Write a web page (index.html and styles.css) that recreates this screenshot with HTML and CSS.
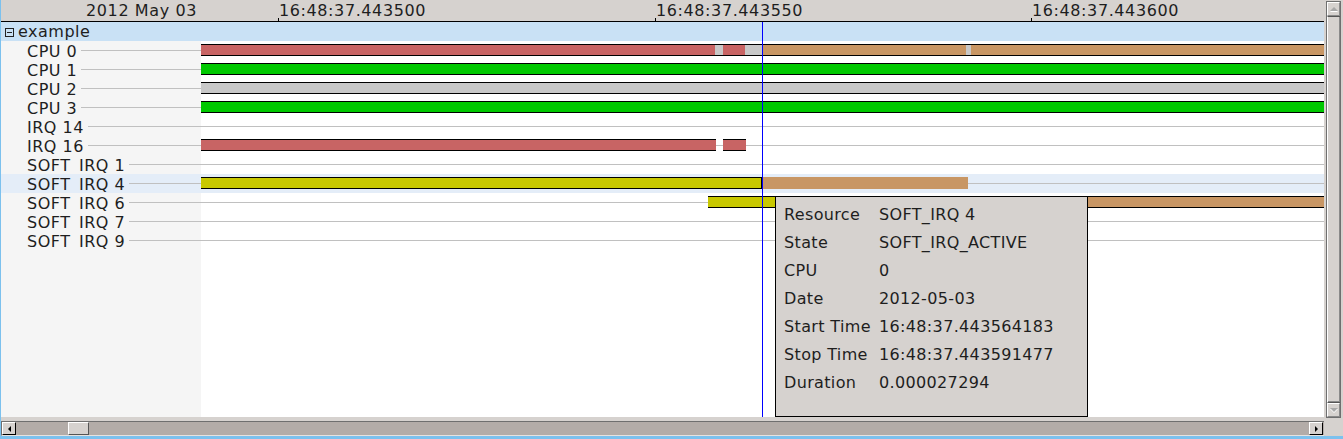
FILE: index.html
```html
<!DOCTYPE html>
<html>
<head>
<meta charset="utf-8">
<link rel="stylesheet" href="styles.css">
</head>
<body>
<div class="window">
  <div class="timeline">
    <div class="header">
      <div class="date">2012 May 03</div>
      <div class="axis">
        <span class="tick" style="left:77px">16:48:37.443500</span>
        <span class="tick" style="left:454px">16:48:37.443550</span>
        <span class="tick" style="left:830px">16:48:37.443600</span>
      </div>
    </div>
    <div class="group"><span class="toggle"></span><span class="gname">example</span></div>
    <div class="body">
      <div class="labels">
        <div class="lrow"><span class="ltext">CPU 0</span><span class="lline"></span></div>
        <div class="lrow"><span class="ltext">CPU 1</span><span class="lline"></span></div>
        <div class="lrow"><span class="ltext">CPU 2</span><span class="lline"></span></div>
        <div class="lrow"><span class="ltext">CPU 3</span><span class="lline"></span></div>
        <div class="lrow"><span class="ltext">IRQ 14</span><span class="lline"></span></div>
        <div class="lrow"><span class="ltext">IRQ 16</span><span class="lline"></span></div>
        <div class="lrow"><span class="ltext">SOFT_IRQ 1</span><span class="lline"></span></div>
        <div class="lrow hl"><span class="ltext">SOFT_IRQ 4</span><span class="lline"></span></div>
        <div class="lrow"><span class="ltext">SOFT_IRQ 6</span><span class="lline"></span></div>
        <div class="lrow"><span class="ltext">SOFT_IRQ 7</span><span class="lline"></span></div>
        <div class="lrow"><span class="ltext">SOFT_IRQ 9</span><span class="lline"></span></div>
      </div>
      <div class="chart">
        <div class="crow">
          <span class="seg red" style="left:0;width:514px"></span>
          <span class="seg gray" style="left:514px;width:8px"></span>
          <span class="seg red" style="left:522px;width:22px"></span>
          <span class="seg gray" style="left:544px;width:17px"></span>
          <span class="seg tan" style="left:561px;width:204px"></span>
          <span class="seg gray" style="left:765px;width:5px"></span>
          <span class="seg tan" style="left:770px;width:353px"></span>
        </div>
        <div class="crow"><span class="seg green" style="left:0;width:1123px"></span></div>
        <div class="crow"><span class="seg gray" style="left:0;width:1123px"></span></div>
        <div class="crow"><span class="seg green" style="left:0;width:1123px"></span></div>
        <div class="crow"></div>
        <div class="crow">
          <span class="seg red" style="left:0;width:515px"></span>
          <span class="seg red" style="left:522px;width:23px"></span>
        </div>
        <div class="crow"></div>
        <div class="crow hl">
          <span class="seg yellow sel" style="left:0;width:561px"></span>
          <span class="seg tan flat" style="left:561px;width:206px"></span>
        </div>
        <div class="crow">
          <span class="seg yellow" style="left:507px;width:193px"></span>
          <span class="seg tan" style="left:700px;width:423px"></span>
        </div>
        <div class="crow"></div>
        <div class="crow"></div>
      </div>
    </div>
    <div class="cursor" style="left:761px"></div>
    <div class="tooltip">
      <span>Resource</span><span>SOFT_IRQ 4</span>
      <span>State</span><span>SOFT_IRQ_ACTIVE</span>
      <span>CPU</span><span>0</span>
      <span>Date</span><span>2012-05-03</span>
      <span>Start Time</span><span>16:48:37.443564183</span>
      <span>Stop Time</span><span>16:48:37.443591477</span>
      <span>Duration</span><span>0.000027294</span>
    </div>
  </div>
  <div class="hcell">
    <div class="hscroll">
      <span class="sbtn"><span class="arrow-left"></span></span>
      <span class="hthumb"></span>
      <span class="hspace"></span>
      <span class="sbtn"><span class="arrow-right"></span></span>
    </div>
  </div>
  <div class="vcol">
    <div class="vscroll">
      <span class="vbtn"><span class="arrow-up"></span></span>
      <span class="vthumb"></span>
      <span class="vbtn"><span class="arrow-down"></span></span>
    </div>
  </div>
</div>
</body>
</html>
```

FILE: styles.css
```css
html, body {
  margin: 0;
  padding: 0;
  background: #d6d2cf;
}
body {
  font-family: "DejaVu Sans", Verdana, sans-serif;
  font-size: 16px;
  color: #1e1e1e;
}
.window {
  width: 1342px;
  height: 436px;
  border-left: 1px solid #7cc1ee;
  border-bottom: 3px solid #7cc1ee;
  display: grid;
  grid-template-columns: 1323px 19px;
  grid-template-rows: 417px 19px;
  background: #d6d2cf;
  overflow: hidden;
}
.timeline {
  grid-column: 1;
  grid-row: 1;
  position: relative;
  display: flex;
  flex-direction: column;
  overflow: hidden;
}
.header {
  height: 22px;
  box-sizing: border-box;
  border-bottom: 1px solid #000;
  padding-top: 1px;
  line-height: 20px;
  display: flex;
  background: #d6d2cf;
  letter-spacing: 0.6px;
  white-space: nowrap;
}
.date {
  width: 200px;
  box-sizing: border-box;
  text-align: right;
  padding-right: 4px;
}
.axis {
  position: relative;
  flex: 1;
}
.tick {
  position: absolute;
  top: 0;
  height: 20px;
  padding-left: 1px;
}
.tick::before {
  content: "";
  position: absolute;
  left: 0;
  bottom: 0;
  width: 1px;
  height: 3px;
  background: #000;
}
.group {
  height: 19px;
  line-height: 19px;
  background: #c9e1f5;
  display: flex;
  letter-spacing: 0.5px;
}
.toggle {
  width: 9px;
  height: 9px;
  box-sizing: border-box;
  border: 1px solid #222;
  margin: 6px 4px 0 4px;
  display: flex;
  align-items: center;
  justify-content: center;
}
.toggle::after {
  content: "";
  width: 5px;
  height: 1px;
  background: #222;
}
.body {
  flex: 1;
  display: grid;
  grid-template-columns: 200px 1123px;
}
.labels {
  background: #f5f5f5;
}
.lrow {
  height: 19px;
  box-sizing: border-box;
  padding-top: 1px;
  padding-left: 26px;
  line-height: 19px;
  display: flex;
  overflow: hidden;
  white-space: nowrap;
  letter-spacing: 0.5px;
}
.lline {
  flex: 1;
  align-self: flex-start;
  height: 1px;
  margin-top: 8px;
  margin-left: 4px;
  background: #c0c0c0;
}
.chart {
  background: #fff;
}
.crow {
  position: relative;
  height: 19px;
  background: linear-gradient(#c0c0c0, #c0c0c0) 0 9px / 100% 1px no-repeat;
}
.hl {
  background-color: #e4edf8;
}
.seg {
  position: absolute;
  top: 3px;
  height: 12px;
  box-sizing: border-box;
  border-top: 1px solid #000;
  border-bottom: 1px solid #000;
}
.seg.flat {
  border: none;
}
.seg.sel {
  border-right: 1px solid #000;
}
.red { background: #c86464; }
.gray { background: #c8c8c8; }
.tan { background: #c89664; }
.green { background: #00c800; }
.yellow { background: #c8c800; }
.cursor {
  position: absolute;
  top: 22px;
  bottom: 0;
  width: 1px;
  background: #0000ff;
}
.tooltip {
  position: absolute;
  left: 774px;
  top: 196px;
  width: 313px;
  height: 221px;
  box-sizing: border-box;
  border: 1px solid #000;
  background: #d6d2cf;
  padding: 4px 0 0 8px;
  display: grid;
  grid-template-columns: 95px auto;
  grid-auto-rows: 28px;
  align-content: start;
  line-height: 28px;
  letter-spacing: 0.35px;
  white-space: nowrap;
}
.hcell {
  grid-column: 1;
  grid-row: 2;
  padding-top: 4px;
}
.hscroll {
  height: 15px;
  box-sizing: border-box;
  border-top: 1px solid #6f6f6f;
  border-left: 1px solid #6f6f6f;
  border-bottom: 1px solid #e6e3e0;
  background: #b3aca8;
  display: flex;
}
.sbtn {
  width: 14px;
  height: 13px;
  box-sizing: border-box;
  background: #d6d2cf;
  border-top: 1px solid #fff;
  border-left: 1px solid #fff;
  border-right: 1px solid #000;
  border-bottom: 1px solid #000;
  display: flex;
  align-items: center;
  justify-content: center;
}
.sbtn:last-child {
  margin-right: 1px;
}
.hthumb {
  width: 21px;
  height: 13px;
  box-sizing: border-box;
  margin-left: 52px;
  background: #d6d2cf;
  border-top: 1px solid #fff;
  border-left: 1px solid #fff;
  border-right: 1px solid #555;
  border-bottom: 1px solid #555;
}
.hspace {
  flex: 1;
}
.arrow-left {
  width: 0;
  height: 0;
  border-top: 3px solid transparent;
  border-bottom: 3px solid transparent;
  border-right: 3px solid #000;
}
.arrow-right {
  width: 0;
  height: 0;
  border-top: 3px solid transparent;
  border-bottom: 3px solid transparent;
  border-left: 3px solid #000;
}
.vcol {
  grid-column: 2;
  grid-row: 1 / span 2;
  padding: 1px 2px 0 2px;
}
.vscroll {
  width: 15px;
  height: 417px;
  box-sizing: border-box;
  border: 1px solid #6f6f6f;
  background: #d6d2cf;
  display: flex;
  flex-direction: column;
}
.vbtn {
  height: 14px;
  box-sizing: border-box;
  border-top: 1px solid #fff;
  border-left: 1px solid #fff;
  border-right: 1px solid #8a8a8a;
  border-bottom: 1px solid #8a8a8a;
  display: flex;
  align-items: center;
  justify-content: center;
}
.vthumb {
  flex: 1;
  box-sizing: border-box;
  border-top: 1px solid #555;
  border-bottom: 1px solid #555;
  border-left: 1px solid #fff;
  box-shadow: inset -1px -1px 0 #8a8a8a;
}
.arrow-up {
  width: 0;
  height: 0;
  border-left: 4px solid transparent;
  border-right: 4px solid transparent;
  border-bottom: 4px solid #a8a8a8;
  filter: drop-shadow(0 1px 0 #fff);
}
.arrow-down {
  width: 0;
  height: 0;
  border-left: 4px solid transparent;
  border-right: 4px solid transparent;
  border-top: 4px solid #a8a8a8;
  filter: drop-shadow(0 1px 0 #fff);
}
```
